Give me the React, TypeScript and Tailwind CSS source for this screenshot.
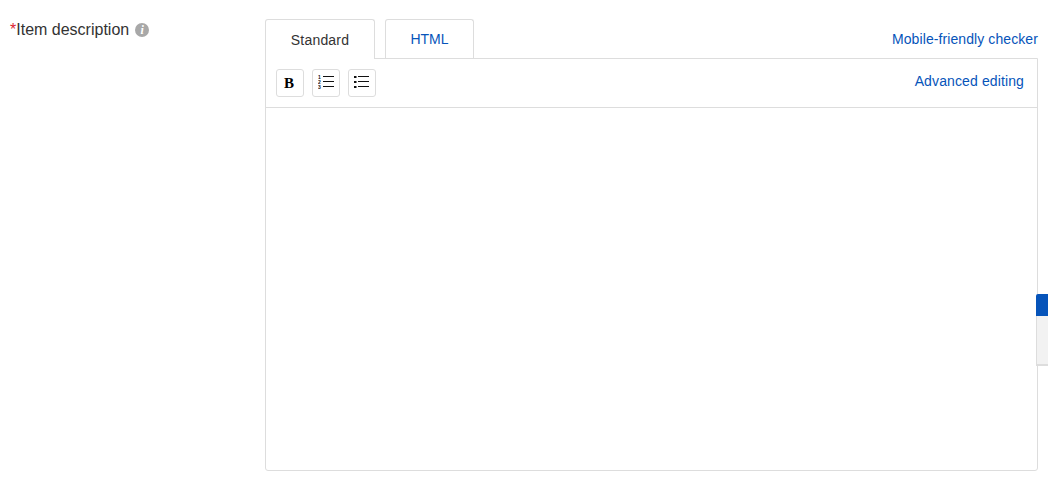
import React from "react";

function NumberedIcon() {
  return (
    <svg width="16" height="16" viewBox="0 0 16 16" className="block">
      <path d="M5 1.5H16M5 6.5H16M5 11.5H16" stroke="#111" strokeWidth="1" fill="none" shapeRendering="crispEdges" />
      <text x="0" y="3.8" fontSize="5" fontFamily="Liberation Sans" fontWeight="700" fill="#111">1</text>
      <text x="0" y="8.8" fontSize="5" fontFamily="Liberation Sans" fontWeight="700" fill="#111">2</text>
      <text x="0" y="14" fontSize="5" fontFamily="Liberation Sans" fontWeight="700" fill="#111">3</text>
    </svg>
  );
}

function BulletIcon() {
  return (
    <svg width="16" height="16" viewBox="0 0 16 16" className="block">
      <path d="M4 1.5H15M4 6.5H15M4 11.5H15" stroke="#111" strokeWidth="1" fill="none" shapeRendering="crispEdges" />
      <rect x="0" y="1" width="2.5" height="2" fill="#111" />
      <rect x="0" y="6" width="2.5" height="2" fill="#111" />
      <rect x="0" y="11" width="2.5" height="2" fill="#111" />
    </svg>
  );
}

function ToolButton({ children }: { children: React.ReactNode }) {
  return (
    <button className="flex h-[28px] w-[28px] items-center justify-center rounded-[3px] border border-[#dddddd] bg-white">
      {children}
    </button>
  );
}

export default function App() {
  return (
    <div className="relative h-[484px] w-[1048px] overflow-hidden bg-white font-['Liberation_Sans',Arial,sans-serif]">
      <div className="flex pt-[19px] pl-[10px] pr-[10px]">
        <div className="flex h-[22px] w-[255px] items-center text-[16px] leading-[22px] text-[#333333]">
          <span className="text-[#dd1e31]">*</span>
          <span>Item description</span>
          <span className="ml-[6px] flex h-[14px] w-[14px] items-center justify-center rounded-full bg-[#a8a8a8] font-['Liberation_Serif',serif] text-[12px] font-bold italic leading-none text-white">
            i
          </span>
        </div>
        <div className="flex w-[773px] flex-col">
          <div className="relative z-10 flex h-[40px] items-start text-[14px]">
            <div className="flex h-[40px] w-[110px] items-center justify-center rounded-t-[3px] border border-b-0 border-[#dddddd] bg-white pt-[2px] tracking-[0.2px] text-[#333333]">
              Standard
            </div>
            <div className="ml-[10px] flex h-[39px] w-[89px] items-center justify-center rounded-t-[3px] border border-b-0 border-[#dddddd] bg-white text-[#0654ba]">
              HTML
            </div>
            <div className="ml-auto flex h-[40px] items-center tracking-[0.09px] text-[#0654ba]">Mobile-friendly checker</div>
          </div>
          <div className="-mt-px flex h-[413px] flex-col rounded-b-[3px] border border-[#dddddd]">
            <div className="flex h-[49px] items-center gap-[8px] border-b border-[#dddddd] pl-[10px] pr-[13px]">
              <ToolButton>
                <span className="mr-[2px] font-['Liberation_Serif',serif] text-[15px] font-bold leading-none text-black">B</span>
              </ToolButton>
              <ToolButton>
                <NumberedIcon />
              </ToolButton>
              <ToolButton>
                <BulletIcon />
              </ToolButton>
              <span className="ml-auto mb-[4px] text-[14px] tracking-[0.12px] text-[#0654ba]">Advanced editing</span>
            </div>
          </div>
        </div>
      </div>
      <div className="absolute left-[1036px] top-[294px] w-[12px]">
        <div className="h-[22px] rounded-tl-[2px] bg-[#0654ba]" />
        <div className="h-[50px] border-b-2 border-l border-[#dddddd] bg-[#f2f2f2]" />
      </div>
    </div>
  );
}
